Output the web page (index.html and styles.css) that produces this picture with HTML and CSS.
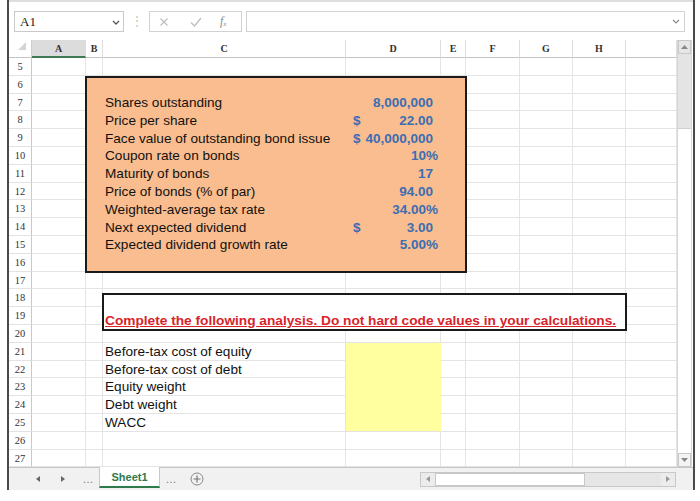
FILE: index.html
```html
<!DOCTYPE html>
<html>
<head>
<meta charset="utf-8">
<link rel="stylesheet" href="styles.css">
</head>
<body>
<div class="window">
  <div class="toolbar">
    <div class="namebox"><span>A1</span>
      <svg class="chev" width="8" height="5" viewBox="0 0 8 5"><path d="M1 1 L4 4 L7 1" fill="none" stroke="#555" stroke-width="1.3"/></svg>
    </div>
    <div class="dots">⋮</div>
    <div class="fxbox">
      <svg width="10" height="10" viewBox="0 0 10 10"><path d="M1.5 1.5 L8.5 8.5 M8.5 1.5 L1.5 8.5" stroke="#bdbdbd" stroke-width="1.2"/></svg>
      <svg width="12" height="10" viewBox="0 0 12 10"><path d="M1 5.5 L4.5 9 L11 1" fill="none" stroke="#bdbdbd" stroke-width="1.2"/></svg>
      <span class="fx">f<sub>x</sub></span>
    </div>
    <div class="formula">
      <svg class="chev" width="8" height="5" viewBox="0 0 8 5"><path d="M1 1 L4 4 L7 1" fill="none" stroke="#888" stroke-width="1.2"/></svg>
    </div>
  </div>

  <div class="main">
    <div class="sheet">
      <div class="corner"><svg width="10" height="10" viewBox="0 0 10 10"><path d="M9 1 L9 9 L1 9 Z" fill="#d4d4d4"/></svg></div>
      <div class="ch sel">A</div><div class="ch">B</div><div class="ch">C</div><div class="ch">D</div><div class="ch">E</div><div class="ch">F</div><div class="ch">G</div><div class="ch">H</div><div class="ch"></div>

      <div class="rh">5</div><div class="c"></div><div class="c"></div><div class="c"></div><div class="c"></div><div class="c"></div><div class="c"></div><div class="c"></div><div class="c"></div><div class="c"></div>
      <div class="rh">6</div><div class="c"></div><div class="c"></div><div class="c"></div><div class="c"></div><div class="c"></div><div class="c"></div><div class="c"></div><div class="c"></div><div class="c"></div>
      <div class="rh">7</div><div class="c"></div><div class="c"></div><div class="c"></div><div class="c"></div><div class="c"></div><div class="c"></div><div class="c"></div><div class="c"></div><div class="c"></div>
      <div class="rh">8</div><div class="c"></div><div class="c"></div><div class="c"></div><div class="c"></div><div class="c"></div><div class="c"></div><div class="c"></div><div class="c"></div><div class="c"></div>
      <div class="rh">9</div><div class="c"></div><div class="c"></div><div class="c"></div><div class="c"></div><div class="c"></div><div class="c"></div><div class="c"></div><div class="c"></div><div class="c"></div>
      <div class="rh">10</div><div class="c"></div><div class="c"></div><div class="c"></div><div class="c"></div><div class="c"></div><div class="c"></div><div class="c"></div><div class="c"></div><div class="c"></div>
      <div class="rh">11</div><div class="c"></div><div class="c"></div><div class="c"></div><div class="c"></div><div class="c"></div><div class="c"></div><div class="c"></div><div class="c"></div><div class="c"></div>
      <div class="rh">12</div><div class="c"></div><div class="c"></div><div class="c"></div><div class="c"></div><div class="c"></div><div class="c"></div><div class="c"></div><div class="c"></div><div class="c"></div>
      <div class="rh">13</div><div class="c"></div><div class="c"></div><div class="c"></div><div class="c"></div><div class="c"></div><div class="c"></div><div class="c"></div><div class="c"></div><div class="c"></div>
      <div class="rh">14</div><div class="c"></div><div class="c"></div><div class="c"></div><div class="c"></div><div class="c"></div><div class="c"></div><div class="c"></div><div class="c"></div><div class="c"></div>
      <div class="rh">15</div><div class="c"></div><div class="c"></div><div class="c"></div><div class="c"></div><div class="c"></div><div class="c"></div><div class="c"></div><div class="c"></div><div class="c"></div>
      <div class="rh">16</div><div class="c"></div><div class="c"></div><div class="c"></div><div class="c"></div><div class="c"></div><div class="c"></div><div class="c"></div><div class="c"></div><div class="c"></div>
      <div class="rh">17</div><div class="c"></div><div class="c"></div><div class="c"></div><div class="c"></div><div class="c"></div><div class="c"></div><div class="c"></div><div class="c"></div><div class="c"></div>
      <div class="rh">18</div><div class="c"></div><div class="c"></div><div class="c"></div><div class="c"></div><div class="c"></div><div class="c"></div><div class="c"></div><div class="c"></div><div class="c"></div>
      <div class="rh">19</div><div class="c"></div><div class="c"></div><div class="c"></div><div class="c"></div><div class="c"></div><div class="c"></div><div class="c"></div><div class="c"></div><div class="c"></div>
      <div class="rh">20</div><div class="c"></div><div class="c"></div><div class="c"></div><div class="c"></div><div class="c"></div><div class="c"></div><div class="c"></div><div class="c"></div><div class="c"></div>
      <div class="rh">21</div><div class="c"></div><div class="c"></div><div class="c txt">Before-tax cost of equity</div><div class="c y"></div><div class="c"></div><div class="c"></div><div class="c"></div><div class="c"></div><div class="c"></div>
      <div class="rh">22</div><div class="c"></div><div class="c"></div><div class="c txt">Before-tax cost of debt</div><div class="c y"></div><div class="c"></div><div class="c"></div><div class="c"></div><div class="c"></div><div class="c"></div>
      <div class="rh">23</div><div class="c"></div><div class="c"></div><div class="c txt">Equity weight</div><div class="c y"></div><div class="c"></div><div class="c"></div><div class="c"></div><div class="c"></div><div class="c"></div>
      <div class="rh">24</div><div class="c"></div><div class="c"></div><div class="c txt">Debt weight</div><div class="c y"></div><div class="c"></div><div class="c"></div><div class="c"></div><div class="c"></div><div class="c"></div>
      <div class="rh">25</div><div class="c"></div><div class="c"></div><div class="c txt">WACC</div><div class="c y last"></div><div class="c"></div><div class="c"></div><div class="c"></div><div class="c"></div><div class="c"></div>
      <div class="rh">26</div><div class="c"></div><div class="c"></div><div class="c"></div><div class="c"></div><div class="c"></div><div class="c"></div><div class="c"></div><div class="c"></div><div class="c"></div>
      <div class="rh">27</div><div class="c"></div><div class="c"></div><div class="c"></div><div class="c"></div><div class="c"></div><div class="c"></div><div class="c"></div><div class="c"></div><div class="c"></div>

      <div class="inputs">
        <div class="irow"><span class="lab">Shares outstanding</span><span class="val"><span></span><span class="n">8,000,000</span></span></div>
        <div class="irow"><span class="lab">Price per share</span><span class="val"><span>$</span><span class="n">22.00</span></span></div>
        <div class="irow"><span class="lab">Face value of outstanding bond issue</span><span class="val"><span>$</span><span class="n">40,000,000</span></span></div>
        <div class="irow"><span class="lab">Coupon rate on bonds</span><span class="val"><span></span><span>10%</span></span></div>
        <div class="irow"><span class="lab">Maturity of bonds</span><span class="val"><span></span><span class="n">17</span></span></div>
        <div class="irow"><span class="lab">Price of bonds (% of par)</span><span class="val"><span></span><span class="n">94.00</span></span></div>
        <div class="irow"><span class="lab">Weighted-average tax rate</span><span class="val"><span></span><span>34.00%</span></span></div>
        <div class="irow"><span class="lab">Next expected dividend</span><span class="val"><span>$</span><span class="n">3.00</span></span></div>
        <div class="irow"><span class="lab">Expected dividend growth rate</span><span class="val"><span></span><span>5.00%</span></span></div>
      </div>

      <div class="note"><span>Complete the following analysis. Do not hard code values in your calculations.</span></div>
    </div>

    <div class="vscroll">
      <div class="vbtn"><svg width="7" height="4" viewBox="0 0 7 4"><path d="M0 4 L3.5 0 L7 4 Z" fill="#888"/></svg></div>
      <div class="vthumb"></div>
      <div class="vbtn down"><svg width="7" height="4" viewBox="0 0 7 4"><path d="M0 0 L3.5 4 L7 0 Z" fill="#888"/></svg></div>
    </div>
  </div>

  <div class="tabs">
    <div class="tnav"><svg width="4" height="6" viewBox="0 0 4 6"><path d="M4 0 L0 3 L4 6 Z" fill="#666"/></svg></div>
    <div class="tnav"><svg width="4" height="6" viewBox="0 0 4 6"><path d="M0 0 L4 3 L0 6 Z" fill="#666"/></svg></div>
    <div class="tnav more">…</div>
    <div class="tab">Sheet1</div>
    <div class="tnav more after">…</div>
    <div class="tnav"><svg width="14" height="14" viewBox="0 0 14 14"><circle cx="7" cy="7" r="6" fill="none" stroke="#888" stroke-width="1"/><path d="M7 3.5 V10.5 M3.5 7 H10.5" stroke="#777" stroke-width="1.2"/></svg></div>
    <div class="hscroll">
      <div class="hbtn"><svg width="4" height="6" viewBox="0 0 4 6"><path d="M4 0 L0 3 L4 6 Z" fill="#999"/></svg></div>
      <div class="hthumb"></div>
      <div class="htrack"></div>
      <div class="hbtn"><svg width="4" height="6" viewBox="0 0 4 6"><path d="M0 0 L4 3 L0 6 Z" fill="#999"/></svg></div>
    </div>
  </div>
</div>
</body>
</html>
```

FILE: styles.css
```css
html, body {
  margin: 0;
  padding: 0;
  background: #ffffff;
}

body {
  width: 700px;
  height: 501px;
  overflow: hidden;
  font-family: "Liberation Sans", Arial, sans-serif;
}

.window {
  margin-left: 7px;
  width: 684px;
  height: 490px;
  border-left: 2px solid #4a4a4a;
  border-right: 2px solid #4a4a4a;
  display: flex;
  flex-direction: column;
}

/* ---------- toolbar ---------- */
.toolbar {
  border-top: 2px solid #dedede;
  display: flex;
  align-items: flex-start;
  padding-top: 9px;
  box-sizing: border-box;
  height: 40px;
  flex: none;
}

.namebox {
  margin-left: 5px;
  width: 110px;
  height: 21px;
  box-sizing: border-box;
  border: 1px solid #c9c9c9;
  display: flex;
  align-items: center;
  justify-content: space-between;
  padding: 0 3px 0 5px;
  font-family: "Liberation Serif", "Times New Roman", serif;
  font-size: 13px;
  color: #222;
}

.namebox .chev {
  margin-top: 2px;
}

.dots {
  width: 25px;
  text-align: center;
  color: #c4c4c4;
  font-size: 12px;
  line-height: 21px;
}

.fxbox {
  width: 93px;
  height: 21px;
  box-sizing: border-box;
  border: 1px solid #d2d2d2;
  display: flex;
  align-items: center;
  padding-left: 9px;
}

.fxbox svg:first-child {
  margin-right: 21px;
}

.fxbox svg:nth-child(2) {
  margin-right: 18px;
}

.fx {
  font-family: "Liberation Serif", serif;
  font-style: italic;
  font-size: 12px;
  color: #888;
}

.fx sub {
  font-size: 7px;
  vertical-align: -1px;
}

.formula {
  margin-left: 4px;
  width: 439px;
  height: 21px;
  box-sizing: border-box;
  border: 1px solid #d2d2d2;
  display: flex;
  align-items: center;
  justify-content: flex-end;
  padding-right: 4px;
}

/* ---------- sheet ---------- */
.main {
  display: flex;
  flex: none;
}

.sheet {
  position: relative;
  display: grid;
  grid-template-columns: 23px 54px 17px 243px 95px 25px 54px 53px 53px 51px;
  grid-template-rows: 18px;
  grid-auto-rows: 17.8px;
  width: 668px;
}

.corner {
  border-right: 1px solid #cfcfcf;
  border-bottom: 1px solid #c4c4c4;
  display: flex;
  align-items: flex-end;
  justify-content: flex-end;
  padding: 0 4px 6px 0;
  box-sizing: border-box;
}

.ch {
  border-right: 1px solid #dddddd;
  border-bottom: 1px solid #c4c4c4;
  font-family: "Liberation Serif", "Times New Roman", serif;
  font-weight: bold;
  font-size: 10px;
  color: #333;
  text-align: center;
  line-height: 18px;
  box-sizing: border-box;
}

.ch.sel {
  background: #dcdcdc;
  border-bottom: 2px solid #3f7a55;
  line-height: 17px;
}

.rh {
  border-right: 1px solid #c9c9c9;
  border-bottom: 1px solid #e3e3e3;
  font-family: "Liberation Serif", "Times New Roman", serif;
  font-size: 10.5px;
  color: #333;
  text-align: center;
  line-height: 17px;
  box-sizing: border-box;
}

.c {
  border-right: 1px solid #e4e4e4;
  border-bottom: 1px solid #e4e4e4;
  box-sizing: border-box;
}

.c.txt {
  font-size: 13.6px;
  line-height: 18px;
  padding-left: 2px;
  color: #111;
  white-space: nowrap;
}

.c.y {
  background: #ffff9f;
  border-right-color: #ffff9f;
  border-bottom-color: #ffff9f;
}

.c.y.last {
  border-bottom-color: #e4e4e4;
}

/* orange input block lying over the grid */
.inputs {
  position: absolute;
  left: 76px;
  top: 36px;
  width: 382px;
  height: 197px;
  box-sizing: border-box;
  background: #f9bd8f;
  border: 2px solid #1a1a1a;
  padding-top: 16px;
  display: flex;
  flex-direction: column;
}

.irow {
  display: flex;
  height: 17.8px;
  line-height: 17.8px;
  font-size: 13.6px;
  white-space: nowrap;
}

.lab {
  width: 259px;
  padding-left: 18px;
  box-sizing: border-box;
  color: #111;
}

.val {
  width: 95px;
  box-sizing: border-box;
  padding: 0 3px 0 7px;
  display: flex;
  justify-content: space-between;
  color: #3c6db2;
  font-weight: bold;
  font-size: 13.5px;
}

.val .n {
  padding-right: 5px;
}

/* instruction box */
.note {
  position: absolute;
  left: 93px;
  top: 253px;
  width: 525px;
  height: 38px;
  box-sizing: border-box;
  border: 2px solid #1a1a1a;
  background: #ffffff;
  display: flex;
  align-items: flex-end;
  padding: 0 0 1px 1px;
}

.note span {
  color: #d8242b;
  font-weight: bold;
  font-size: 13.7px;
  line-height: 15px;
  text-decoration: underline;
  white-space: nowrap;
}

/* vertical scrollbar */
.vscroll {
  width: 15px;
  display: flex;
  flex-direction: column;
  border-left: 1px solid #d6d6d6;
  border-right: 1px solid #d6d6d6;
  box-sizing: border-box;
  background: #ffffff;
}

.vbtn {
  height: 14px;
  flex: none;
  background: #e6e6e6;
  border: 1px solid #c8c8c8;
  box-sizing: border-box;
  display: flex;
  align-items: center;
  justify-content: center;
}

.vbtn.down {
  margin-top: auto;
  background: #f4f4f4;
}

.vthumb {
  height: 74px;
  background: #e4e4e4;
  border-bottom: 1px solid #d0d0d0;
}

/* ---------- sheet tabs ---------- */
.tabs {
  height: 23px;
  flex: none;
  background: #f1f1f1;
  border-top: 1px solid #c6c6c6;
  box-sizing: border-box;
  display: flex;
  align-items: center;
  padding-left: 22px;
}

.tnav {
  width: 14px;
  height: 20px;
  display: flex;
  align-items: center;
  justify-content: center;
  margin-right: 11px;
  color: #777;
  font-size: 11px;
}

.tnav.more {
  margin-right: 4px;
}

.tnav.more.after {
  margin-right: 12px;
}

.tab {
  align-self: flex-start;
  margin-top: -1px;
  width: 61px;
  height: 21px;
  box-sizing: border-box;
  background: #ffffff;
  border-left: 1px solid #c8c8c8;
  border-right: 1px solid #c8c8c8;
  border-bottom: 2px solid #2d7a4a;
  color: #2d7a4a;
  font-weight: bold;
  font-size: 11px;
  line-height: 20px;
  text-align: center;
  margin-right: 4px;
}

.hscroll {
  margin-left: auto;
  margin-right: 17px;
  width: 256px;
  height: 15px;
  display: flex;
  border: 1px solid #c8c8c8;
  box-sizing: border-box;
  background: #e6e6e6;
}

.hbtn {
  width: 14px;
  flex: none;
  display: flex;
  align-items: center;
  justify-content: center;
  background: #ececec;
}

.hthumb {
  width: 150px;
  background: #ffffff;
  border: 1px solid #c8c8c8;
  box-sizing: border-box;
}

.htrack {
  flex: 1;
}
```
